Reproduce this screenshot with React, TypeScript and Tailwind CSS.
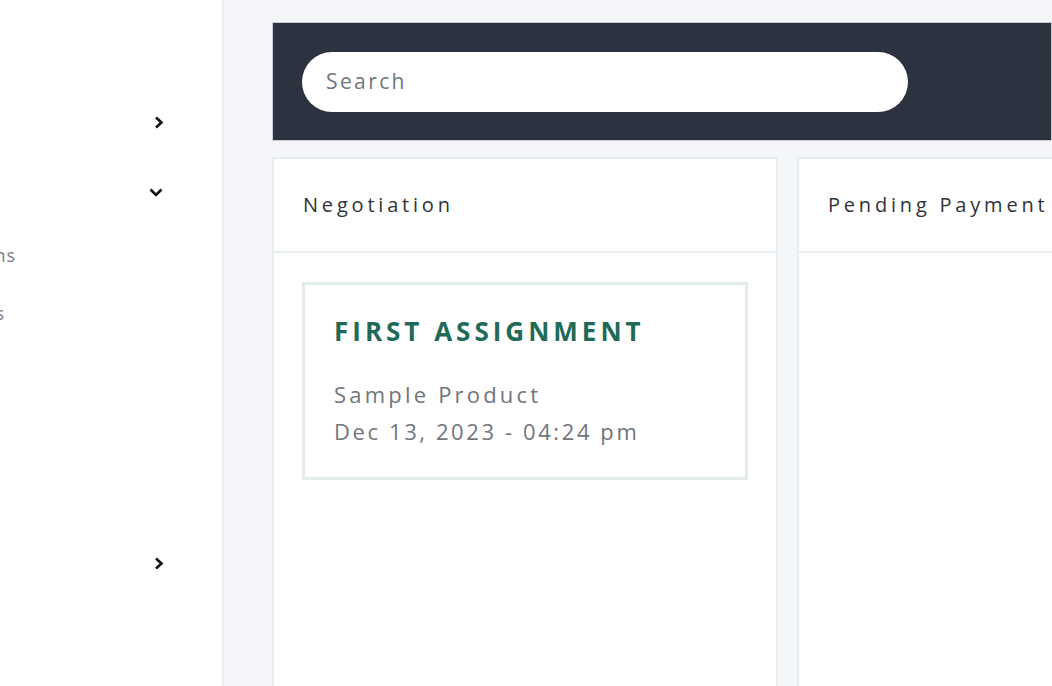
import { ReactNode } from 'react';

function ChevronRight() {
  return (
    <svg width="10" height="13" viewBox="0 0 10 13" fill="none">
      <path d="M2 1.5 7.5 6.5 2 11.5" stroke="#111" strokeWidth="2.6" />
    </svg>
  );
}

function ChevronDown() {
  return (
    <svg width="14" height="9" viewBox="0 0 14 9" fill="none">
      <path d="M1.5 1.5 7 7 12.5 1.5" stroke="#111" strokeWidth="2.6" />
    </svg>
  );
}

function NavRow({ icon, top, left }: { icon: ReactNode; top: string; left: string }) {
  return <div className={`flex ${top} ${left} h-[30px] items-center`}>{icon}</div>;
}

function SubItem({ label, right }: { label: string; right: string }) {
  return (
    <div className={`flex justify-end ${right} h-[24px] items-center text-[18px] tracking-[1px] text-[#7a7e86]`}>
      <span className="whitespace-nowrap">{label}</span>
    </div>
  );
}

function Column({ title, children }: { title: string; children?: ReactNode }) {
  return (
    <div className="flex flex-col w-[506px] shrink-0 bg-white border-2 border-b-0 border-[#e6eef0]">
      <div className="h-[94px] flex items-center px-[29px] border-b-2 border-[#e8eff1] overflow-hidden">
        <span className="text-[20px] tracking-[3.8px] whitespace-nowrap text-[#2f333a]">{title}</span>
      </div>
      <div className="flex-1 px-[28px] pt-[29px]">{children}</div>
    </div>
  );
}

export default function App() {
  return (
    <div className="flex h-[686px] w-[1052px] overflow-hidden bg-[#f4f6fa] font-['Open_Sans',sans-serif]">
      {/* Sidebar */}
      <aside className="w-[224px] shrink-0 bg-white border-r-2 border-[#e9eff2] overflow-hidden">
        <NavRow top="mt-[107px]" left="pl-[154px]" icon={<ChevronRight />} />
        <NavRow top="mt-[40px]" left="pl-[149px]" icon={<ChevronDown />} />
        <SubItem label="Transactions" right="w-[16px] mt-[36px]" />
        <SubItem label="Payments" right="w-[5px] mt-[34px]" />
        <NavRow top="mt-[223px]" left="pl-[154px]" icon={<ChevronRight />} />
      </aside>

      {/* Main */}
      <main className="flex-1 pl-[48px] pt-[22px] min-w-0">
        <div className="h-[119px] bg-[#2d3240] border border-[#c9ced6] flex items-center pl-[29px]">
          <div className="w-[606px] h-[60px] rounded-full bg-white flex items-center pl-[24px]">
            <span className="text-[21px] tracking-[2.4px] text-[#70757e]">Search</span>
          </div>
        </div>

        <div className="flex gap-[19px] mt-[16px] h-[529px]">
          <Column title="Negotiation">
            <div className="border-[3px] border-[#e3ebed] h-[198px] px-[29px] pt-[28px]">
              <div className="text-[26px] font-bold tracking-[4px] text-[#216a57] leading-[36px] whitespace-nowrap">
                FIRST ASSIGNMENT
              </div>
              <div className="mt-[27px] text-[22px] tracking-[2.6px] text-[#71757d] leading-[37px] whitespace-nowrap">
                <div className="tracking-[3.2px]">Sample Product</div>
                <div>Dec 13, 2023 - 04:24 pm</div>
              </div>
            </div>
          </Column>
          <Column title="Pending Payment" />
        </div>
      </main>
    </div>
  );
}
